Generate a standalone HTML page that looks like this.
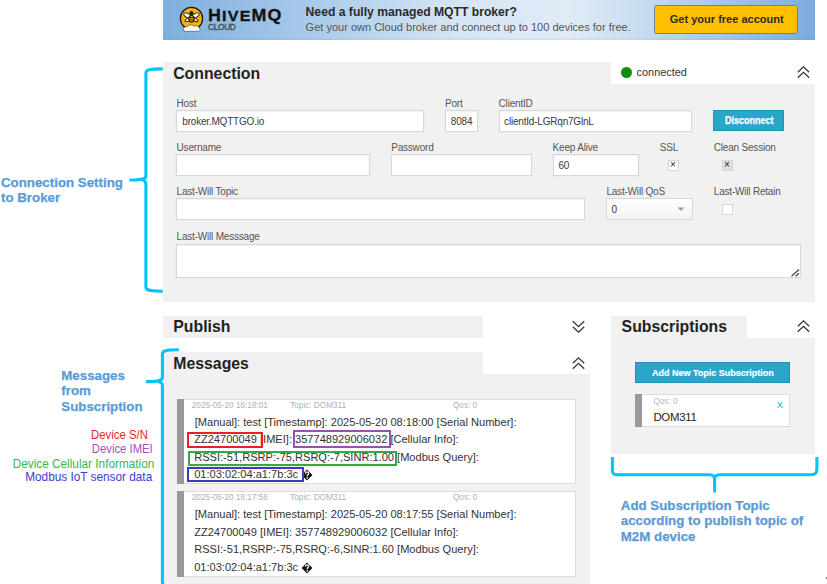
<!DOCTYPE html>
<html><head><meta charset="utf-8"><style>
html,body{margin:0;padding:0;width:827px;height:584px;overflow:hidden;background:#fff;}
body{position:relative;font-family:"Liberation Sans",sans-serif;}
.t{position:absolute;white-space:nowrap;line-height:1;}
.r{position:absolute;}
</style></head><body>
<div class="r" style="left:163px;top:0px;width:652px;height:39.6px;box-shadow:inset 0 -1.5px 0 rgba(40,100,170,0.07);background:linear-gradient(90deg,#7eafde 0%,#aecdeb 25%,#d5e5f4 45%,#e0ebf7 62%,#c9ddf1 73%,#a0c2e7 88%,#7aacde 100%);"></div>
<svg class="r" style="left:177px;top:4px" width="30" height="32" viewBox="0 0 30 32">
<circle cx="14.5" cy="14.4" r="11.1" fill="#f6b400" stroke="#1a1a1a" stroke-width="1.3"/>
<ellipse cx="10.6" cy="11.6" rx="4.2" ry="1.9" fill="#fff" stroke="#1a1a1a" stroke-width="0.9" transform="rotate(28 10.6 11.6)"/>
<ellipse cx="18.4" cy="11.6" rx="4.2" ry="1.9" fill="#fff" stroke="#1a1a1a" stroke-width="0.9" transform="rotate(-28 18.4 11.6)"/>
<ellipse cx="11.2" cy="15.6" rx="3.4" ry="1.5" fill="#fff" stroke="#1a1a1a" stroke-width="0.9" transform="rotate(-28 11.2 15.6)"/>
<ellipse cx="17.8" cy="15.6" rx="3.4" ry="1.5" fill="#fff" stroke="#1a1a1a" stroke-width="0.9" transform="rotate(28 17.8 15.6)"/>
<circle cx="14.5" cy="9" r="2" fill="#1a1a1a"/>
<ellipse cx="14.5" cy="14.8" rx="2.7" ry="3.3" fill="#f6b400" stroke="#1a1a1a" stroke-width="1.1"/>
<path d="M12 13.6 H17 M12 15.8 H17" stroke="#1a1a1a" stroke-width="1"/>
<path d="M6.8 26.2 C5.8 23.5 8.5 22 10.2 23 C11.2 20.6 15.5 20.2 17 22.3 C18.8 21 22 22 22 24 C23.8 24.3 23.6 27 21.8 27.2 L8.5 27.4 C7.5 27.4 6.9 27 6.8 26.2Z" fill="#fff" stroke="#333" stroke-width="0.6"/>
</svg>
<div class="t" style="left:208px;top:7px;font-size:16.5px;font-weight:bold;color:#111;letter-spacing:1.1px;line-height:1;-webkit-text-stroke:0.3px #111;transform:scaleX(1.08);transform-origin:0 0">H<span style="font-size:14.9px">IVE</span>MQ</div>
<div class="t" style="left:208px;top:23px;font-size:8.4px;font-weight:normal;color:#3f4a55;letter-spacing:-0.35px;-webkit-text-stroke:0.3px #3f4a55">CLOUD</div>
<div class="t" style="left:305.6px;top:6px;font-size:12.16px;font-weight:bold;color:#2b2b2b;">Need a fully managed MQTT broker?</div>
<div class="t" style="left:305.6px;top:22px;font-size:11.02px;font-weight:normal;color:#555;">Get your own Cloud broker and connect up to 100 devices for free.</div>
<div class="r" style="left:654px;top:5px;width:143.5px;height:28.799999999999997px;background:#ffc000;border:1px solid #5f8c8a;border-radius:2.5px;box-sizing:border-box;"></div>
<div class="t" style="left:669.8px;top:14px;font-size:11.03px;font-weight:bold;color:#2b2b2b;">Get your free account</div>
<div class="r" style="left:163px;top:62px;width:448px;height:22.5px;background:#f1f1f1"></div>
<div class="r" style="left:163px;top:84px;width:652px;height:217.5px;background:#f1f1f1"></div>
<div class="t" style="left:173.2px;top:66px;font-size:15.82px;font-weight:bold;color:#222;">Connection</div>
<div class="r" style="left:621px;top:66.6px;width:11.2px;height:11.2px;border-radius:50%;background:#0a8f0a"></div>
<div class="t" style="left:636.6px;top:67px;font-size:10.92px;font-weight:normal;color:#333;">connected</div>
<svg class="r" style="left:796.8px;top:66.3px" width="13" height="13" viewBox="0 0 13 13"><path d="M0.8 6.3 L6.5 0.9 L12.2 6.3 M0.8 11.8 L6.5 6.4 L12.2 11.8" fill="none" stroke="#333" stroke-width="1.25"/></svg>
<div class="t" style="left:176.6px;top:99px;font-size:10px;font-weight:normal;color:#555;letter-spacing:-0.2px">Host</div>
<div class="r" style="left:176.2px;top:110px;width:247.8px;height:22px;background:#fff;border:1px solid #d8d8d8;box-sizing:border-box;box-shadow:0 0 0.8px rgba(0,0,0,0.10),inset 0 1px 1px rgba(0,0,0,0.05)"></div>
<div class="t" style="left:182.3px;top:117px;font-size:10px;font-weight:normal;color:#3a3a3a;letter-spacing:-0.2px">broker.MQTTGO.io</div>
<div class="t" style="left:445px;top:99px;font-size:10px;font-weight:normal;color:#555;letter-spacing:-0.2px">Port</div>
<div class="r" style="left:445px;top:110px;width:33px;height:22px;background:#fff;border:1px solid #d8d8d8;box-sizing:border-box;box-shadow:0 0 0.8px rgba(0,0,0,0.10),inset 0 1px 1px rgba(0,0,0,0.05)"></div>
<div class="t" style="left:450.8px;top:117px;font-size:10px;font-weight:normal;color:#3a3a3a;letter-spacing:-0.2px">8084</div>
<div class="t" style="left:498.6px;top:99px;font-size:10px;font-weight:normal;color:#555;letter-spacing:-0.2px">ClientID</div>
<div class="r" style="left:498.6px;top:110px;width:193.89999999999998px;height:22px;background:#fff;border:1px solid #d8d8d8;box-sizing:border-box;box-shadow:0 0 0.8px rgba(0,0,0,0.10),inset 0 1px 1px rgba(0,0,0,0.05)"></div>
<div class="t" style="left:504.1px;top:117px;font-size:10px;font-weight:normal;color:#3a3a3a;letter-spacing:-0.2px">clientId-LGRqn7GlnL</div>
<div class="r" style="left:713px;top:109.7px;width:71px;height:21.499999999999986px;background:#2ba6cb;border:1px solid #2391b3;box-sizing:border-box"></div>
<div class="t" style="left:725.3px;top:115px;font-size:10.6px;font-weight:bold;color:#fff;transform:scaleX(0.85);transform-origin:0 0;-webkit-text-stroke:0.25px #fff">Disconnect</div>
<div class="t" style="left:176.6px;top:143px;font-size:10px;font-weight:normal;color:#555;letter-spacing:-0.2px">Username</div>
<div class="r" style="left:176.2px;top:154px;width:193.8px;height:22.400000000000006px;background:#fff;border:1px solid #d8d8d8;box-sizing:border-box;box-shadow:0 0 0.8px rgba(0,0,0,0.10),inset 0 1px 1px rgba(0,0,0,0.05)"></div>
<div class="t" style="left:391.2px;top:143px;font-size:10px;font-weight:normal;color:#555;letter-spacing:-0.2px">Password</div>
<div class="r" style="left:391.2px;top:154px;width:140.8px;height:22.400000000000006px;background:#fff;border:1px solid #d8d8d8;box-sizing:border-box;box-shadow:0 0 0.8px rgba(0,0,0,0.10),inset 0 1px 1px rgba(0,0,0,0.05)"></div>
<div class="t" style="left:552.6px;top:143px;font-size:10px;font-weight:normal;color:#555;letter-spacing:-0.2px">Keep Alive</div>
<div class="r" style="left:552.6px;top:154px;width:86.39999999999998px;height:22.400000000000006px;background:#fff;border:1px solid #d8d8d8;box-sizing:border-box;box-shadow:0 0 0.8px rgba(0,0,0,0.10),inset 0 1px 1px rgba(0,0,0,0.05)"></div>
<div class="t" style="left:558.5px;top:161px;font-size:10px;font-weight:normal;color:#3a3a3a;letter-spacing:-0.2px">60</div>
<div class="t" style="left:659.8px;top:143px;font-size:10px;font-weight:normal;color:#555;letter-spacing:-0.2px">SSL</div>
<div class="r" style="left:667.5px;top:160.3px;width:11.200000000000045px;height:11.099999999999994px;background:#fff;border:1px solid #d6d6d6;box-sizing:border-box"></div>
<div class="t" style="left:669.9px;top:160px;font-size:10px;font-weight:normal;color:#222;">&#215;</div>
<div class="t" style="left:713.8px;top:143px;font-size:10px;font-weight:normal;color:#555;letter-spacing:-0.2px">Clean Session</div>
<div class="r" style="left:721.7px;top:160.3px;width:11.099999999999909px;height:11.099999999999994px;background:#dedede;border:1px solid #d6d6d6;box-sizing:border-box"></div>
<div class="t" style="left:724.1px;top:160px;font-size:10px;font-weight:normal;color:#222;">&#215;</div>
<div class="t" style="left:176.6px;top:187px;font-size:10px;font-weight:normal;color:#555;letter-spacing:-0.2px">Last-Will Topic</div>
<div class="r" style="left:176.2px;top:197.8px;width:409.3px;height:22.19999999999999px;background:#fff;border:1px solid #d8d8d8;box-sizing:border-box;box-shadow:0 0 0.8px rgba(0,0,0,0.10),inset 0 1px 1px rgba(0,0,0,0.05)"></div>
<div class="t" style="left:606.4px;top:187px;font-size:10px;font-weight:normal;color:#555;letter-spacing:-0.2px">Last-Will QoS</div>
<div class="r" style="left:606.4px;top:197.8px;width:86.80000000000007px;height:21.899999999999977px;background:linear-gradient(#fff,#f3f3f3);border:1px solid #d8d8d8;box-sizing:border-box"></div>
<div class="t" style="left:611.6px;top:205px;font-size:10px;font-weight:normal;color:#3a3a3a;letter-spacing:-0.2px">0</div>
<svg class="r" style="left:676.5px;top:206.8px" width="8" height="4.5" viewBox="0 0 8 4.5"><path d="M0.5 0.5 L7.5 0.5 L4 4Z" fill="#9a9a9a"/></svg>
<div class="t" style="left:713.8px;top:187px;font-size:10px;font-weight:normal;color:#555;letter-spacing:-0.2px">Last-Will Retain</div>
<div class="r" style="left:721.7px;top:204.1px;width:11.099999999999909px;height:10.700000000000017px;background:#fff;border:1px solid #d6d6d6;box-sizing:border-box"></div>
<div class="t" style="left:176.6px;top:232px;font-size:10px;font-weight:normal;color:#555;letter-spacing:-0.2px">Last-Will Messsage</div>
<div class="r" style="left:176.2px;top:243.6px;width:624.8px;height:34.00000000000003px;background:#fff;border:1px solid #d8d8d8;box-sizing:border-box;box-shadow:0 0 0.8px rgba(0,0,0,0.10),inset 0 1px 1px rgba(0,0,0,0.05)"></div>
<svg class="r" style="left:791px;top:267.6px" width="9" height="9" viewBox="0 0 9 9"><path d="M0.5 8.3 L8 1.5 M4.6 8.3 L8 5.2" stroke="#4a4a4a" stroke-width="1.3"/></svg>
<div class="r" style="left:163px;top:315.5px;width:320px;height:22.0px;background:#f1f1f1"></div>
<div class="t" style="left:173.3px;top:319px;font-size:15.82px;font-weight:bold;color:#222;">Publish</div>
<svg class="r" style="left:572.0px;top:320.3px" width="13" height="13" viewBox="0 0 13 13"><path d="M0.8 1.2 L6.5 6.6 L12.2 1.2 M0.8 6.7 L6.5 12.1 L12.2 6.7" fill="none" stroke="#333" stroke-width="1.25"/></svg>
<div class="r" style="left:163px;top:351.5px;width:320px;height:22.69999999999999px;background:#f1f1f1"></div>
<div class="r" style="left:163px;top:373.7px;width:427px;height:210.3px;background:#f1f1f1"></div>
<div class="t" style="left:173.3px;top:356px;font-size:15.82px;font-weight:bold;color:#222;">Messages</div>
<svg class="r" style="left:572.0px;top:356.6px" width="13" height="13" viewBox="0 0 13 13"><path d="M0.8 6.3 L6.5 0.9 L12.2 6.3 M0.8 11.8 L6.5 6.4 L12.2 11.8" fill="none" stroke="#333" stroke-width="1.25"/></svg>
<div class="r" style="left:177px;top:398.7px;width:399px;height:85.60000000000002px;background:#fff;border:1px solid #ddd;border-left:none;box-sizing:border-box"></div>
<div class="r" style="left:177px;top:398.7px;width:7px;height:85.60000000000002px;background:#999"></div>
<div class="t" style="left:191.8px;top:402px;font-size:8.2px;font-weight:normal;color:#b0b0b0;">2025-05-20 16:18:01</div>
<div class="t" style="left:290.2px;top:402px;font-size:8.2px;font-weight:normal;color:#b0b0b0;">Topic: DOM311</div>
<div class="t" style="left:453px;top:402px;font-size:8.2px;font-weight:normal;color:#b0b0b0;">Qos: 0</div>
<div class="t" style="left:194.7px;top:417px;font-size:11.07px;font-weight:normal;color:#333;">[Manual]: test [Timestamp]: 2025-05-20 08:18:00 [Serial Number]:</div>
<div class="t" style="left:194.2px;top:434px;font-size:11.07px;font-weight:normal;color:#333;">ZZ24700049 [IMEI]: 357748929006032 [Cellular Info]:</div>
<div class="t" style="left:194.2px;top:452px;font-size:11.07px;font-weight:normal;color:#333;">RSSI:-51,RSRP:-75,RSRQ:-7,SINR:1.00 [Modbus Query]:</div>
<div class="t" style="left:194.2px;top:469px;font-size:11.07px;font-weight:normal;color:#333;">01:03:02:04:a1:7b:3c</div>
<div class="r" style="left:177px;top:491.3px;width:399px;height:85.69999999999999px;background:#fff;border:1px solid #ddd;border-left:none;box-sizing:border-box"></div>
<div class="r" style="left:177px;top:491.3px;width:7px;height:85.69999999999999px;background:#999"></div>
<div class="t" style="left:191.8px;top:494px;font-size:8.2px;font-weight:normal;color:#b0b0b0;">2025-05-20 16:17:56</div>
<div class="t" style="left:290.2px;top:494px;font-size:8.2px;font-weight:normal;color:#b0b0b0;">Topic: DOM311</div>
<div class="t" style="left:453px;top:494px;font-size:8.2px;font-weight:normal;color:#b0b0b0;">Qos: 0</div>
<div class="t" style="left:194.7px;top:509px;font-size:11.07px;font-weight:normal;color:#333;">[Manual]: test [Timestamp]: 2025-05-20 08:17:55 [Serial Number]:</div>
<div class="t" style="left:194.2px;top:527px;font-size:11.07px;font-weight:normal;color:#333;">ZZ24700049 [IMEI]: 357748929006032 [Cellular Info]:</div>
<div class="t" style="left:194.2px;top:544px;font-size:11.07px;font-weight:normal;color:#333;">RSSI:-51,RSRP:-75,RSRQ:-6,SINR:1.60 [Modbus Query]:</div>
<div class="t" style="left:194.2px;top:562px;font-size:11.07px;font-weight:normal;color:#333;">01:03:02:04:a1:7b:3c</div>
<svg class="r" style="left:301.0px;top:468.7px" width="12" height="12" viewBox="0 0 12 12"><path d="M6 0.5999999999999996 L11.4 6 L6 11.4 L0.5999999999999996 6Z" fill="#111"/><path d="M4.5 4.7 C4.5 3.5 5.2 2.9 6.1 2.9 C7.1 2.9 7.7 3.5 7.7 4.3 C7.7 5.4 6.2 5.6 6.2 7.2" fill="none" stroke="#fff" stroke-width="1.25"/><circle cx="6.2" cy="8.9" r="0.8" fill="#fff"/></svg>
<svg class="r" style="left:301.0px;top:561.6px" width="12" height="12" viewBox="0 0 12 12"><path d="M6 0.5999999999999996 L11.4 6 L6 11.4 L0.5999999999999996 6Z" fill="#111"/><path d="M4.5 4.7 C4.5 3.5 5.2 2.9 6.1 2.9 C7.1 2.9 7.7 3.5 7.7 4.3 C7.7 5.4 6.2 5.6 6.2 7.2" fill="none" stroke="#fff" stroke-width="1.25"/><circle cx="6.2" cy="8.9" r="0.8" fill="#fff"/></svg>
<div class="r" style="left:186.9px;top:431.5px;width:75.70000000000002px;height:16.100000000000023px;border:2px solid #e8202a;box-sizing:border-box"></div>
<div class="r" style="left:293.3px;top:430.4px;width:97.69999999999999px;height:17.80000000000001px;border:2px solid #9b4fb3;box-sizing:border-box"></div>
<div class="r" style="left:187.8px;top:450.9px;width:209.0px;height:15.400000000000034px;border:2px solid #2eac46;box-sizing:border-box"></div>
<div class="r" style="left:186.9px;top:467.2px;width:116.79999999999998px;height:14.400000000000034px;border:2px solid #3b3bc4;box-sizing:border-box"></div>
<div class="r" style="left:611px;top:315.6px;width:135.60000000000002px;height:22.399999999999977px;background:#f1f1f1"></div>
<div class="r" style="left:611px;top:337.5px;width:203.5px;height:116.5px;background:#f1f1f1"></div>
<div class="t" style="left:621.6px;top:319px;font-size:15.82px;font-weight:bold;color:#222;">Subscriptions</div>
<svg class="r" style="left:796.8px;top:320.0px" width="13" height="13" viewBox="0 0 13 13"><path d="M0.8 6.3 L6.5 0.9 L12.2 6.3 M0.8 11.8 L6.5 6.4 L12.2 11.8" fill="none" stroke="#333" stroke-width="1.25"/></svg>
<div class="r" style="left:635px;top:362.2px;width:155px;height:21.100000000000023px;background:#2ba6cb;border:1px solid #2391b3;box-sizing:border-box"></div>
<div class="t" style="left:651.6px;top:368px;font-size:9.9px;font-weight:bold;color:#fff;transform:scaleX(0.91);transform-origin:0 0;-webkit-text-stroke:0.2px #fff">Add New Topic Subscription</div>
<div class="r" style="left:635px;top:394.4px;width:155.29999999999995px;height:32.60000000000002px;background:#fff;border:1px solid #ddd;box-sizing:border-box"></div>
<div class="r" style="left:635px;top:394.4px;width:7px;height:32.60000000000002px;background:#999"></div>
<div class="t" style="left:653.4px;top:398px;font-size:8.2px;font-weight:normal;color:#b8b8b8;">Qos: 0</div>
<div class="t" style="left:653.4px;top:412px;font-size:11.4px;font-weight:normal;color:#222;letter-spacing:-0.25px">DOM311</div>
<div class="t" style="left:776.8px;top:400px;font-size:9.6px;font-weight:normal;color:#2ba6cb;">X</div>
<svg class="r" style="left:0;top:0" width="827" height="584" viewBox="0 0 827 584">
<path d="M162.8 68.9 C152 69 145.9 69 145.9 73 L145.9 176 C145.9 178.5 144 180 129.5 180 M145.9 184 C145.9 181.5 144 180 142 180 M145.9 184 L145.9 287 C145.9 291 152 291.2 162.8 291.2" fill="none" stroke="#00c5fd" stroke-width="3.1"/>
<path d="M178.8 349.8 C168 350 162.4 350 162.4 354 L162.4 377.5 C162.4 380 160 381.6 146 381.6 M162.4 385.5 C162.4 383 160 381.6 158 381.6 M162.4 385.5 L162.4 582 C162.4 585.5 165 586.5 176 586.5" fill="none" stroke="#00c5fd" stroke-width="3.1"/>
<path d="M612.4 456.9 L612.4 470 C612.4 474.5 614 474.7 620 474.7 L710 474.7 C712.8 474.7 714.6 475.8 714.6 479.5 L714.6 492.5 M714.6 479.5 C714.6 475.8 716.4 474.7 719.2 474.7 L810 474.7 C816 474.7 816.9 473 816.9 468 L816.9 456.9" fill="none" stroke="#00c5fd" stroke-width="3.1"/>
</svg>
<div class="t" style="left:1px;top:176px;font-size:13.3px;font-weight:bold;color:#5b9bd5;-webkit-text-stroke:0.25px #5b9bd5">Connection Setting</div>
<div class="t" style="left:1px;top:191px;font-size:13.3px;font-weight:bold;color:#5b9bd5;-webkit-text-stroke:0.25px #5b9bd5">to Broker</div>
<div class="t" style="left:61.3px;top:369px;font-size:13.3px;font-weight:bold;color:#5b9bd5;-webkit-text-stroke:0.25px #5b9bd5">Messages</div>
<div class="t" style="left:61.3px;top:384px;font-size:13.3px;font-weight:bold;color:#5b9bd5;-webkit-text-stroke:0.25px #5b9bd5">from</div>
<div class="t" style="left:61.3px;top:400px;font-size:13.3px;font-weight:bold;color:#5b9bd5;-webkit-text-stroke:0.25px #5b9bd5">Subscription</div>
<div class="t" style="left:620.8px;top:499px;font-size:13.3px;font-weight:bold;color:#5b9bd5;-webkit-text-stroke:0.25px #5b9bd5">Add Subscription Topic</div>
<div class="t" style="left:620.8px;top:514px;font-size:13.3px;font-weight:bold;color:#5b9bd5;-webkit-text-stroke:0.25px #5b9bd5">according to publish topic of</div>
<div class="t" style="left:620.8px;top:530px;font-size:13.3px;font-weight:bold;color:#5b9bd5;-webkit-text-stroke:0.25px #5b9bd5">M2M device</div>
<div class="t" style="right:679.4px;top:429px;font-size:12.2px;color:#ea1f28;transform:scaleX(0.933);transform-origin:100% 0">Device S/N</div>
<div class="t" style="right:674.1px;top:443px;font-size:12.2px;color:#a452c0;transform:scaleX(0.926);transform-origin:100% 0">Device IMEI</div>
<div class="t" style="right:673.1px;top:458px;font-size:12.2px;color:#3cb44b;transform:scaleX(0.968);transform-origin:100% 0">Device Cellular Information</div>
<div class="t" style="right:675.0px;top:471px;font-size:12.2px;color:#3b3bd0;transform:scaleX(0.968);transform-origin:100% 0">Modbus IoT sensor data</div>
<div class="r" style="left:825.5px;top:576.5px;width:1.5px;height:2.5px;background:#777"></div>
</body></html>
